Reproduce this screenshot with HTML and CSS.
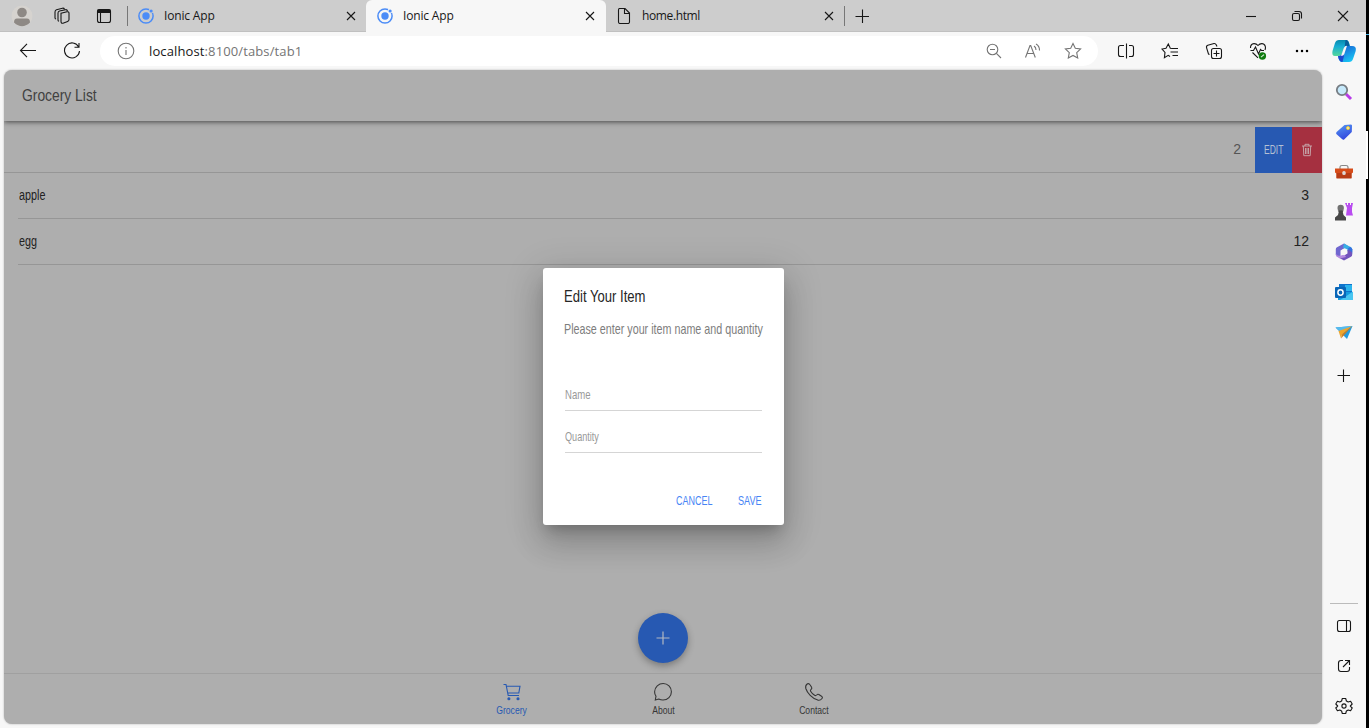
FILE: index.html
```html
<!DOCTYPE html>
<html lang="en">
<head>
<meta charset="utf-8">
<title>Ionic App</title>
<link rel="stylesheet" href="styles.css">
</head>
<body>
<div class="screen">
<div class="browser">
  <header class="titlebar">
    <div class="workspace">
      <svg class="avatar" width="22" height="22" viewBox="0 0 22 22"><circle cx="11" cy="11" r="10.5" fill="#d6d3cf"/><circle cx="11" cy="7.5" r="4.8" fill="#8e8985"/><path d="M3 17.5Q3 13.5 6 13.5H16Q19 13.5 19 17.5Q11 25 3 17.5Z" fill="#8e8985"/></svg>
      <svg width="18" height="18" viewBox="0 0 18 18" class="line"><path d="M8 6.2L14 4.8Q16 4.5 16 6.3V12.5Q16 14 14.6 14.4L10 16.2Q8 16.5 8 14.6ZM5 13.8V6Q5 4.5 6.5 4L12.5 2.7M2 11.5V5Q2 3.3 3.5 2.8L9.5 1.2Q11 1 11.5 2.2M5 13.8L6 14.3M2 11.5L3 12M12.5 2.7Q14 2.4 14.5 4"/></svg>
      <svg width="16" height="16" viewBox="0 0 16 16" class="line"><rect x="1.5" y="1.5" width="13" height="13" rx="2"/><path d="M1.5 3.2H14.5" stroke-width="3.6"/><path d="M4.5 5V14"/></svg>
    </div>
    <div class="tab">
      <svg width="16" height="16" viewBox="0 0 16 16"><circle cx="8" cy="8" r="7.1" fill="none" stroke="#4b8cf7" stroke-width="1.5"/><circle cx="8" cy="8" r="3.7" fill="#4b8cf7"/><circle cx="13.1" cy="3" r="2.4" fill="#cdcdcd"/><circle cx="13.1" cy="3" r="1.6" fill="#4b8cf7"/></svg>
      <span class="tab-name">Ionic App</span>
      <svg width="10" height="10" viewBox="0 0 10 10" class="line"><path d="M1 1L9 9M9 1L1 9"/></svg>
    </div>
    <div class="tab active">
      <svg width="16" height="16" viewBox="0 0 16 16"><circle cx="8" cy="8" r="7.1" fill="none" stroke="#4b8cf7" stroke-width="1.5"/><circle cx="8" cy="8" r="3.7" fill="#4b8cf7"/><circle cx="13.1" cy="3" r="2.4" fill="#f7f7f7"/><circle cx="13.1" cy="3" r="1.6" fill="#4b8cf7"/></svg>
      <span class="tab-name">Ionic App</span>
      <svg width="10" height="10" viewBox="0 0 10 10" class="line"><path d="M1 1L9 9M9 1L1 9"/></svg>
    </div>
    <div class="tab last">
      <svg width="16" height="16" viewBox="0 0 16 16" class="line"><path d="M3.5.5H9L13.5 5V14Q13.5 15.5 12 15.5H4Q2.5 15.5 2.5 14V2Q2.5.5 3.5.5ZM8.5.5V5.5H13.5"/></svg>
      <span class="tab-name">home.html</span>
      <svg width="10" height="10" viewBox="0 0 10 10" class="line"><path d="M1 1L9 9M9 1L1 9"/></svg>
    </div>
    <svg class="new-tab line" width="14" height="14" viewBox="0 0 14 14"><path d="M7.5 .5V14M.5 7.5H14"/></svg>
    <div class="window-buttons">
      <svg width="12" height="12" viewBox="0 0 12 12" class="line"><path d="M1 6.5H11"/></svg>
      <svg width="12" height="12" viewBox="0 0 12 12" class="line"><rect x="1.5" y="3.5" width="7" height="7" rx="1.5"/><path d="M3.5 1.5H8Q10.5 1.5 10.5 4V8.5"/></svg>
      <svg width="12" height="12" viewBox="0 0 12 12" class="line"><path d="M1 1L11 11M11 1L1 11"/></svg>
    </div>
  </header>
  <div class="workarea">
    <main class="main">
      <div class="toolbar">
        <svg class="back line" width="18" height="18" viewBox="0 0 18 18"><path d="M17 8.5H1.8M8 1.8L1.5 8.5L8 15.2"/></svg>
        <svg class="reload line" width="18" height="18" viewBox="0 0 18 18"><path d="M15.7 5A7.5 7.5 0 1 0 16.5 9M16 1V5.3H11.5"/></svg>
        <div class="address">
          <svg width="18" height="18" viewBox="0 0 18 18" class="line grey"><circle cx="9" cy="9" r="7.8"/><path d="M9 8V13M9 5V6.5"/></svg>
          <span class="url"><b>localhost</b>:8100/tabs/tab1</span>
          <div class="address-icons">
            <svg width="16" height="16" viewBox="0 0 16 16" class="line grey"><circle cx="6.5" cy="6.5" r="5.3"/><path d="M10.4 10.4L15 15M4 6.5H9"/></svg>
            <svg width="18" height="16" viewBox="0 0 18 16" class="line grey"><path d="M1.5 14.5L6 2.5H6.7L11.3 14.5M3.2 10.5H9.6M10 3Q12 4.3 12 7M12 1Q15.6 3 15.5 7.6"/></svg>
            <svg width="18" height="18" viewBox="0 0 18 18" class="line grey"><path d="M9 1.5L11.3 6.3L16.6 7L12.7 10.7L13.7 16L9 13.4L4.3 16L5.3 10.7L1.4 7L6.7 6.3Z"/></svg>
          </div>
        </div>
        <div class="actions">
          <svg width="18" height="18" viewBox="0 0 18 18" class="line"><path d="M9.5 1.5V16.5M7 3.5H3.5Q1.5 3.5 1.5 5.5V12.5Q1.5 14.5 3.5 14.5H7M12 3.5H14.5Q16.5 3.5 16.5 5.5V12.5Q16.5 14.5 14.5 14.5H12"/></svg>
          <svg width="18" height="18" viewBox="0 0 18 18" class="line"><path d="M11 6.5L9.3 6.2L7.3 2L5 6.2L1 7L4 10.4L3.4 15.6L7.2 13.3L9 14.5M11 6.5H17M9.5 10H17M11.5 13.5H17"/></svg>
          <svg width="18" height="18" viewBox="0 0 18 18" class="line"><rect x="6.5" y="6.5" width="10" height="10" rx="2"/><path d="M11.5 8.5V14.5M8.5 11.5H14.5M4.5 12.5L3.5 12L1.6 5.8Q1 4 2.8 3.3L9 1.5Q10.5 1.3 11.2 2.7L12 4.5"/></svg>
          <svg width="18" height="18" viewBox="0 0 18 18" class="line"><path d="M1.5 6Q1.3 2 5 1.6Q7.3 1.5 9 3.5Q10.7 1.5 13 1.6Q16.5 2 16.5 6L16 8M3.5 10.5L9 15.8M1.5 8.5H4.5L6.5 5L9.5 12L11.5 7.5L12.5 8.5H15"/><circle cx="13.4" cy="14" r="3.7" fill="#107c10" stroke="none"/><path d="M12 15.2L15 12.6" stroke="#d8edd8"/></svg>
          <svg width="18" height="18" viewBox="0 0 18 18"><circle cx="4" cy="9" r="1.25"/><circle cx="9" cy="9" r="1.25"/><circle cx="14" cy="9" r="1.25"/></svg>
        </div>
      </div>
      <section class="page">
        <div class="app-header"><span class="narrow heading">Grocery List</span></div>
        <div class="list">
          <div class="row slid"><span class="qty faded">2</span>
            <div class="edit"><span class="narrow">EDIT</span></div>
            <div class="delete"><svg width="12" height="14" viewBox="0 0 12 14"><path d="M1 3H11M4 3V1.3H8V3M2.3 3L2.8 12.7H9.2L9.7 3M4.5 5V11M6 5V11M7.5 5V11" fill="none" stroke="#c8aeb1" stroke-width=".9"/></svg></div>
          </div>
          <div class="row inset"><span class="narrow item">apple</span><span class="qty">3</span></div>
          <div class="row inset"><span class="narrow item">egg</span><span class="qty">12</span></div>
        </div>
        <div class="fab"><svg width="14" height="14" viewBox="0 0 14 14"><path d="M7 .5V13.5M.5 7H13.5" stroke="#b2b8c2" stroke-width="1.2"/></svg></div>
        <nav class="tabbar">
          <div class="nav selected"><svg width="20" height="20" viewBox="0 0 20 20"><path d="M1.5 2.5H4L6.2 13.5H17M4.4 4.2H18L16.8 11H5.8"/><circle cx="6.9" cy="16.7" r="1" fill="currentColor"/><circle cx="16" cy="16.7" r="1" fill="currentColor"/></svg><span class="narrow">Grocery</span></div>
          <div class="nav"><svg width="20" height="20" viewBox="0 0 20 20"><path d="M2.3 18L3 14.2Q1.5 12 1.6 9.7C1.8 5 5.6 1.5 10.2 1.5C14.8 1.5 18.4 5.2 18.4 9.8C18.4 14.4 14.7 18 10 18Q7.7 18 5.7 17Z"/></svg><span class="narrow">About</span></div>
          <div class="nav"><svg width="20" height="20" viewBox="0 0 20 20"><path d="M3.5 1.8Q5 1 6 2.8L7.6 5.2Q8.3 6.4 7 7.5Q6 8.3 6.6 9.3Q8 11.7 10.6 13.3Q11.7 14 12.6 13Q13.6 11.8 14.9 12.5L17.5 14.2Q19 15.2 18 16.5Q16.2 18.8 13.8 18.1Q9.7 16.8 6.2 13.3Q2.9 10 1.8 6.5Q1 3.6 3.5 1.8Z"/></svg><span class="narrow">Contact</span></div>
        </nav>
        <div class="dialog">
          <div class="narrow dialog-title">Edit Your Item</div>
          <div class="narrow dialog-message">Please enter your item name and quantity</div>
          <div class="field first"><span class="narrow name">Name</span></div>
          <div class="field"><span class="narrow quantity">Quantity</span></div>
          <div class="dialog-buttons"><div class="cancel"><span class="narrow">CANCEL</span></div><div class="save"><span class="narrow">SAVE</span></div></div>
        </div>
      </section>
    </main>
    <aside class="sidebar">
      <svg class="copilot" width="26" height="26" viewBox="0 0 26 26"><defs><linearGradient id="ca" x2="0" y2="1"><stop stop-color="#0789ad"/><stop offset=".4" stop-color="#16acd4"/><stop offset="1" stop-color="#55d89b"/></linearGradient><linearGradient id="cb" x2=".6" y2="1"><stop stop-color="#1659ce"/><stop offset=".5" stop-color="#188be2"/><stop offset="1" stop-color="#18c4f3"/></linearGradient></defs><path d="M8 2H15Q17.5 2 18.5 6L19 8H15.5Q13.8 8 13 11L11 16Q10 18 7.5 18H4Q.5 18 1.5 13L4 5Q5 2 8 2Z" fill="url(#ca)"/><path d="M8 18Q10 18 11 16L13 10Q14 8 16 8H21Q25.8 8 24.7 13L22 21Q21 24 18 24H11Q8 24 7 18Z" fill="url(#cb)"/><path d="M14.5 2H15.5Q17.5 2 18.5 8H15.5Q14 8 13.5 10Z" fill="#075d9a"/><path d="M7 18H8Q10 18 11 16L12 13L13 18L11.5 24Q8 24 7 18Z" fill="#1d48ce"/><path d="M12.8 10Q13.7 7.7 16 7.7L13.3 16Q12.5 18 10 18Z" fill="#f7f7f7"/></svg>
      <svg width="18" height="18" viewBox="0 0 18 18"><path d="M11 11L16 16" stroke="#b83be8" stroke-width="3"/><circle cx="7" cy="7" r="5.2" fill="#c6e9fb" stroke="#777d83" stroke-width="1.8"/></svg>
      <svg width="18" height="18" viewBox="0 0 18 18"><defs><linearGradient id="tag" x2=".4" y2="1"><stop stop-color="#579af2"/><stop offset="1" stop-color="#3349df"/></linearGradient></defs><path d="M9.5 2L16 1.5Q17.3 1.5 17 3L16.8 9L9.4 16.2Q8.3 17.4 7 16L1.6 11.3Q.5 10.2 1.6 9Z" fill="url(#tag)"/><circle cx="13" cy="5" r="1.5" fill="#f9f0b0" stroke="#ecc834"/></svg>
      <svg width="18" height="18" viewBox="0 0 18 18"><path d="M5 6V4Q5 2.5 7 2.5H11Q13 2.5 13 4V6" fill="none" stroke="#888" stroke-width="1.2"/><path d="M0 5.5H18V9.5L16.5 10.5V15H1.5V10.5L0 9.5Z" fill="#d64c19"/><path d="M1.5 10H16.5V15.5H1.5Z" fill="#b83c15"/><rect x="7.3" y="8" width="3.4" height="4" rx="1.5" fill="#ded7d4"/></svg>
      <svg width="18" height="18" viewBox="0 0 18 18"><path d="M10 0H12V2H13V0H15V2H16V0H18L17 5V9L18 12.5H11L12 5Z" fill="#b94cf0"/><circle cx="5.7" cy="5" r="3.2" fill="#717171"/><path d="M2.7 7.5H8.7L7.8 9L8.5 12L11 14.5V17.5H0V14.5L3 12L3.7 9Z" fill="#474747"/></svg>
      <svg width="18" height="18" viewBox="0 0 18 18"><path d="M9 .5L2 4.3Q.8 5 .8 6.3V11.5Q1 14 5.5 14.5V7.5L9 5.5L13 3Z" fill="#7067cf"/><path d="M9 .5L16 4.3Q17.2 5 17.2 6.3V11L12.5 8V6.5L8 4.5Z" fill="#38aee5"/><path d="M17.2 6V11.7Q17.2 13 16 13.7L9 17.5L4 14.7L12.5 10.5V7Z" fill="#7354bd"/><path d="M12.5 6L17.2 9.5V6.3Q17 5 15 3.8Z" fill="#3570df"/><path d="M.8 10.5Q2 13.7 6 12.4L9.5 11.5L11 14L5 15.4L2 13.7Q.8 13 .8 11.7Z" fill="#b48ae0"/><path d="M9 5.8L12 7.5V10.8L9 12.3L6 10.7V7.5Z" fill="#f7f7f7"/></svg>
      <svg width="18" height="18" viewBox="0 0 18 18"><path d="M4 1H17V11H4Z" fill="#0f74cc"/><path d="M10 2H17V8H10Z" fill="#2cb4ed"/><path d="M3 9H18V17H3Z" fill="#139be0"/><path d="M10 14L18 8.5V17H5Z" fill="#49c6f1"/><rect y="4" width="11" height="11" rx="1" fill="#0966b7"/><ellipse cx="5.5" cy="9.5" rx="2.6" ry="2.7" fill="none" stroke="#fff" stroke-width="1.5"/></svg>
      <svg width="18" height="18" viewBox="0 0 18 18"><path d="M.5 4.5L17.5 3L12 16L7.5 11.5Z" fill="#229ce1"/><path d="M.5 4.5L17.5 3L6 9Z" fill="#56bbed"/><path d="M3.5 8L17 3.2L7 11.5L6 15.5Z" fill="#f0a62b"/><path d="M7 11.5L17 3.2L6 15.5Z" fill="#ca7d20"/></svg>
      <svg class="add line" width="14" height="14" viewBox="0 0 14 14"><path d="M6.5 .5V13M.5 6.5H13"/></svg>
      <div class="side-bottom">
        <svg width="18" height="18" viewBox="0 0 18 18" class="line"><rect x="2.5" y="3.5" width="13" height="11" rx="2"/><path d="M11.5 3.5V14.5"/></svg>
        <svg width="18" height="18" viewBox="0 0 18 18" class="line"><path d="M8 3.5H6Q3.5 3.5 3.5 6V12Q3.5 14.5 6 14.5H12Q14.5 14.5 14.5 12V10M10 3.5H14.5V8M14.5 3.5L8 10"/></svg>
        <svg width="18" height="18" viewBox="0 0 18 18" class="line"><path d="M7.3 1.5H10.7L11.4 4L13.2 5L15.6 4.2L17.2 7L15.3 9L17.2 11L15.6 13.8L13.2 13L11.4 14L10.7 16.5H7.3L6.6 14L4.8 13L2.4 13.8L.8 11L2.7 9L.8 7L2.4 4.2L4.8 5L6.6 4Z" stroke-linejoin="round"/><circle cx="9" cy="9" r="2.1"/></svg>
      </div>
    </aside>
  </div>
</div>
<div class="edge"><i class="edge-line"></i><i class="edge-block"></i></div>
</div>
</body>
</html>
```
FILE: styles.css
```css
* { box-sizing: border-box; }
body { margin: 0; width: 1369px; height: 728px; overflow: hidden; font-family: "Liberation Sans", Arial, sans-serif; }
svg { display: block; flex: none; }
.line { fill: none; stroke: #171717; stroke-width: 1.1; }
.line.grey { stroke: #757575; }
.screen { display: flex; height: 728px; }
.browser { width: 1366px; display: flex; flex-direction: column; background: #f7f7f7; }
.edge { width: 3px; background: #000; display: flex; flex-direction: column; }
.edge-line { height: 1px; margin-top: 34px; background: #48b8e9; }
.edge-block { width: 2px; height: 48px; margin-top: 96px; background: #fff; }

.titlebar { height: 32px; flex: none; display: flex; align-items: center; background: #cdcdcd; border-bottom: 1px solid #c0c0c0; }
.workspace { width: 127px; display: flex; align-items: center; padding-left: 11px; gap: 20px; }
.workspace svg:last-child { margin-left: 5px; }
.tab { width: 239px; height: 20px; display: flex; align-items: center; border-left: 1px solid #777; padding: 0 10px 0 10px; font: 12px/16px "Open Sans", sans-serif; color: #171717; }
.tab-name { flex: 1; margin-left: 10px; letter-spacing: -.17px; }
.tab.active { width: 240px; height: 32px; margin-bottom: -1px; background: #f7f7f7; border: 0; border-radius: 6px 6px 0 0; padding-left: 11px; padding-right: 11px; }
.tab.last { border-left: 0; border-right: 1px solid #777; padding-right: 10px; }
.tab.last .tab-name { letter-spacing: -.37px; }
.new-tab { margin-left: 10px; }
.window-buttons { margin-left: auto; display: flex; gap: 34px; padding-right: 17px; }

.workarea { flex: 1; min-height: 0; display: flex; }
.main { width: 1322px; padding-left: 4px; display: flex; flex-direction: column; }
.toolbar { height: 38px; display: flex; align-items: center; padding: 0 0 0 15px; }
.reload { margin-left: 26px; }
.address { width: 998px; height: 30px; margin-left: 19px; padding: 0 16px 0 17px; display: flex; align-items: center; background: #fff; border-radius: 15px; }
.url { margin-left: 14px; font: 13px/18px "Open Sans", sans-serif; letter-spacing: .12px; color: #747474; }
.url b { color: #171717; font-weight: 400; }
.address-icons { margin-left: auto; display: flex; align-items: center; gap: 22px; }
.actions { display: flex; gap: 26px; padding-left: 19px; }

.page { position: relative; height: 654px; display: flex; flex-direction: column; background: #aeaeae; border-radius: 8px; overflow: hidden; color: #2d2d2d; box-shadow: 0 0 2px #aaa; }
.narrow { display: inline-block; white-space: nowrap; transform: scaleX(var(--fit)); transform-origin: left center; }
.app-header { height: 51px; flex: none; padding-left: 18px; box-shadow: 0 1px 5px rgba(0,0,0,.6); }
.heading { --fit: .815; font-size: 17px; line-height: 52px; color: #414141; }
.list { padding-top: 6px; }
.row { height: 46px; display: flex; align-items: center; justify-content: space-between; border-bottom: 1px solid #969696; font-size: 14px; color: #222; }
.row.inset { margin-left: 14px; padding-right: 13px; }
.row.slid { justify-content: flex-end; }
.item, .qty { padding-bottom: 2px; }
.item { --fit: .77; margin-left: 1px; }
.faded { margin-right: 14px; color: #555; }
.edit, .delete { height: 46px; margin-bottom: -1px; display: flex; align-items: center; }
.edit { width: 37px; padding-left: 9px; background: #2759b2; color: #b4c0d4; font-size: 12px; --fit: .71; }
.delete { width: 30px; justify-content: center; background: #a53040; }
.fab { width: 50px; height: 50px; margin: auto auto 10px 634px; display: grid; place-items: center; border-radius: 50%; background: #2759b2; box-shadow: 0 3px 7px rgba(0,0,0,.3); }
.tabbar { height: 51px; flex: none; display: flex; justify-content: center; border-top: 1px solid #a0a0a0; padding-top: 8px; }
.nav { width: 151px; display: flex; flex-direction: column; align-items: center; font-size: 11px; line-height: 12px; gap: 2px; --fit: .78; color: #363636; }
.nav .narrow { transform-origin: center; }
.nav svg { fill: none; stroke: currentColor; stroke-width: 1.1; }
.nav.selected { color: #2759b2; }

.dialog { position: absolute; left: 539px; top: 198px; width: 241px; height: 257px; padding: 18px 22px 0 21px; display: flex; flex-direction: column; background: #fff; border-radius: 3px; box-shadow: 0 9px 12px -5px rgba(0,0,0,.2), 0 19px 30px 2px rgba(0,0,0,.14), 0 7px 36px 6px rgba(0,0,0,.12); }
.dialog-title { --fit: .77; font-size: 17px; line-height: 22px; color: #262626; width: 0; }
.dialog-message { --fit: .716; font-size: 15px; line-height: 20px; margin-top: 11px; color: #7d7d7d; width: 0; }
.field { height: 42px; margin-left: 1px; display: flex; align-items: flex-end; padding-bottom: 8px; border-bottom: 1px solid #d5d5d5; font-size: 13px; line-height: 15px; color: #999; }
.field.first { margin-top: 30px; }
.name { --fit: .735; }
.quantity { --fit: .70; }
.dialog-buttons { display: flex; justify-content: flex-end; margin-top: 40px; font-size: 13px; line-height: 15px; color: #4785f5; }
.cancel { width: 61.5px; --fit: .69; }
.save { width: 24.5px; --fit: .70; }

.sidebar { width: 44px; display: flex; flex-direction: column; align-items: center; gap: 22px; padding-top: 6px; }
.copilot { margin-bottom: -3px; }
.add { margin-top: 6px; }
.side-bottom { width: 28px; margin-top: auto; border-top: 1px solid #bbb; padding: 13px 5px; display: flex; flex-direction: column; gap: 22px; }
```
